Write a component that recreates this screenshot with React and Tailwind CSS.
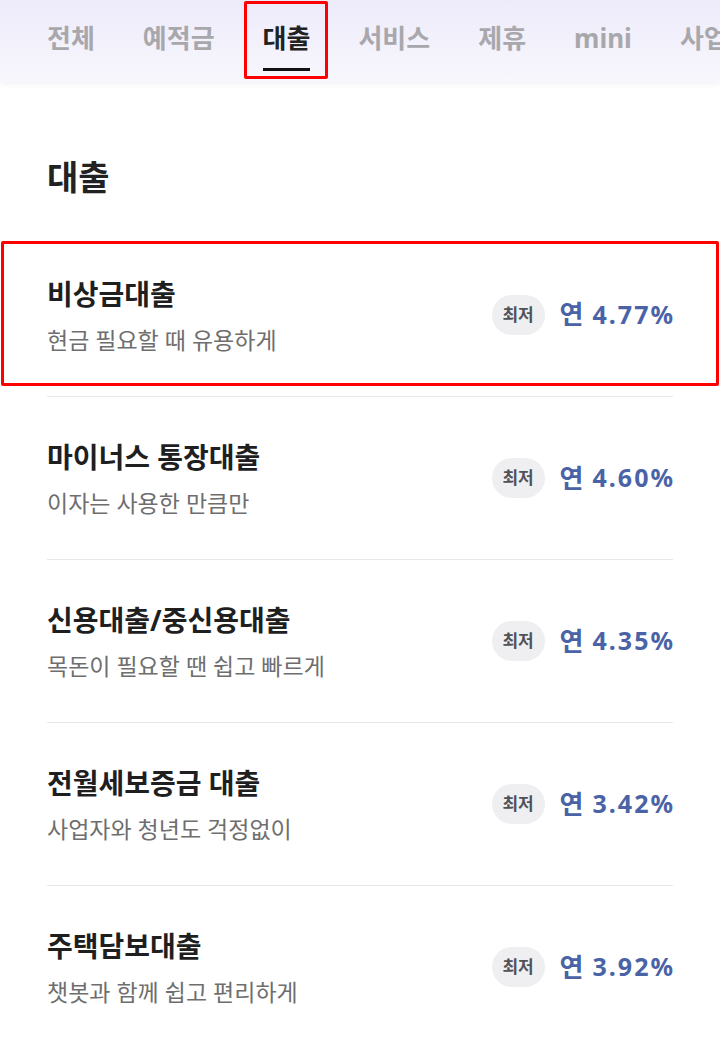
import React from "react";

const TABS = ["전체", "예적금", "대출", "서비스", "제휴", "mini", "사업자"];

const LOANS = [
  { name: "비상금대출", desc: "현금 필요할 때 유용하게", rate: "4.77%" },
  { name: "마이너스 통장대출", desc: "이자는 사용한 만큼만", rate: "4.60%" },
  { name: "신용대출/중신용대출", desc: "목돈이 필요할 땐 쉽고 빠르게", rate: "4.35%" },
  { name: "전월세보증금 대출", desc: "사업자와 청년도 걱정없이", rate: "3.42%" },
  { name: "주택담보대출", desc: "챗봇과 함께 쉽고 편리하게", rate: "3.92%" },
];

const font = { fontFamily: '"Noto Sans", "Noto Sans CJK KR", sans-serif' };

function Tabs() {
  return (
    <div className="relative z-10 h-[82px] bg-gradient-to-b from-[#edebfa] to-[#f8f7fd] shadow-[0_2px_5px_rgba(0,0,0,0.06)] overflow-hidden">
      <div className="flex flex-row gap-[48px] pl-[47px] whitespace-nowrap">
        {TABS.map((tab) =>
          tab === "대출" ? (
            <div key={tab} className="relative shrink-0 h-[82px] flex flex-col items-center">
              <span className="mt-[20px] text-[26px] leading-[36px] font-bold text-[#222]">{tab}</span>
              <div className="mt-[12px] w-full h-[3px] bg-[#111]" />
              <div className="absolute -left-[19px] -right-[18px] top-[1px] h-[78px] border-[3px] border-[#ff0000] rounded-[2px]" />
            </div>
          ) : (
            <span key={tab} className="shrink-0 mt-[20px] text-[26px] leading-[36px] font-bold text-[#a8a8ac]">
              {tab}
            </span>
          )
        )}
      </div>
    </div>
  );
}

function LoanRow({ item, first, highlight }) {
  return (
    <div className={`relative flex flex-row items-center justify-between h-[163px] ${first ? "" : "border-t border-[#e8e8ea]"}`}>
      <div className="flex flex-col pt-[2px]">
        <span className="text-[28px] leading-[36px] font-bold text-[#1f1f1f]">{item.name}</span>
        <span className="mt-[12px] text-[23px] leading-[32px] text-[#6e6e6e]">{item.desc}</span>
      </div>
      <div className="flex flex-row items-center shrink-0 whitespace-nowrap">
        <span className="flex items-center justify-center w-[53px] h-[40px] rounded-full bg-[#efeff1] text-[17px] font-bold text-[#50525a]">
          최저
        </span>
        <span className="ml-[15px] text-[26px] font-bold text-[#4a63a6]">연</span>
        <span className="ml-[9px] text-[25px] font-bold text-[#4a63a6] tracking-[2px] -mr-[2px]">{item.rate}</span>
      </div>
      {highlight && (
        <div className="absolute -left-[46px] -right-[46px] top-[8px] bottom-[10px] border-[3px] border-[#ff0000] rounded-[2px]" />
      )}
    </div>
  );
}

export default function App() {
  return (
    <div className="w-[720px] h-[1062px] bg-white overflow-hidden" style={font}>
      <Tabs />
      <div className="px-[47px]">
        <h2 className="mt-[73px] text-[34px] leading-[44px] font-bold text-[#222]">대출</h2>
        <div className="mt-[34px]">
          {LOANS.map((item, i) => (
            <LoanRow key={item.name} item={item} first={i === 0} highlight={i === 0} />
          ))}
        </div>
      </div>
    </div>
  );
}
